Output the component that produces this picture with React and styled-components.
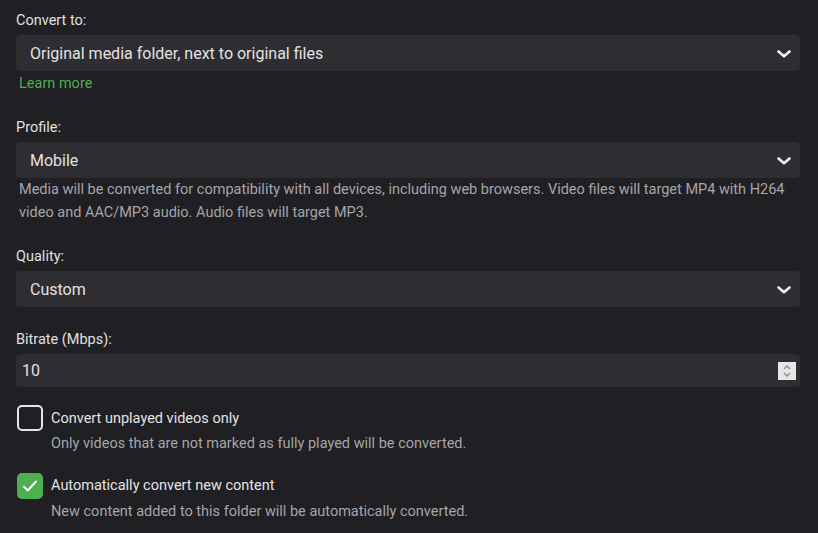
import React from 'react'
import styled, { createGlobalStyle } from 'styled-components';

const GlobalStyle = createGlobalStyle`
  html, body {
    margin: 0;
    padding: 0;
    background: #201f23;
    font-family: Roboto, "Noto Sans", "Liberation Sans", sans-serif;
    color: #e6e6e6;
  }
`;

const Page = styled.div`
  width: 818px;
  height: 533px;
  box-sizing: border-box;
  padding: 12px 18px 0 16px;
  background: #201f23;
  overflow: hidden;
`;

const Field = styled.div`
  margin-bottom: ${p => p.gap || 24}px;
`;

const Label = styled.label`
  display: block;
  font-size: 14.5px;
  line-height: 18px;
  color: #e0e0e0;
  margin-bottom: 5px;
`;

const SelectBox = styled.div`
  display: flex;
  align-items: center;
  height: 36px;
  padding: 0 9px 0 14px;
  border-radius: 4px;
  background: #2e2d31;
  font-size: 16px;
  color: #e2e2e2;
`;

const Value = styled.span`
  flex: 1;
`;

const Chevron = styled.svg`
  width: 14px;
  height: 8px;
  margin-top: 2px;
`;

const LearnMore = styled.a`
  display: block;
  margin: 4px 0 0 3px;
  font-size: 14.5px;
  line-height: 18px;
  color: #4caf50;
  text-decoration: none;
`;

const Desc = styled.div`
  margin: ${p => p.top || 0}px 0 0 ${p => p.left || 3}px;
  font-size: 14.5px;
  line-height: 23.2px;
  color: #a6a5a9;
`;

const NumberBox = styled.div`
  display: flex;
  align-items: center;
  height: 33px;
  padding: 0 4px 0 6px;
  border-radius: 4px;
  background: #2e2d31;
  font-size: 16px;
  color: #e2e2e2;
`;

const Spinner = styled.div`
  width: 18px;
  height: 18px;
  background: #e6e6e6;
  display: flex;
  align-items: center;
  justify-content: center;
`;

const CheckRow = styled.div`
  display: flex;
  align-items: center;
  gap: 8px;
`;

const Box = styled.div`
  width: 26px;
  height: 26px;
  margin-left: 1px;
  box-sizing: border-box;
  border-radius: 5px;
  border: ${p => (p.checked ? 'none' : '2px solid #e6e6e6')};
  background: ${p => (p.checked ? '#4caf50' : 'transparent')};
  display: flex;
  align-items: center;
  justify-content: center;
`;

const CheckLabel = styled.span`
  font-size: 14.5px;
  color: #e4e4e4;
`;

const Chev = () => (
  <Chevron viewBox="0 0 14 8" fill="none" stroke="#f0f0f0" strokeWidth="2.6" strokeLinecap="round" strokeLinejoin="round">
    <polyline points="1.5,1.5 7,6.3 12.5,1.5" />
  </Chevron>
);

const Select = ({ value }) => (
  <SelectBox>
    <Value>{value}</Value>
    <Chev />
  </SelectBox>
);

const Check = ({ checked, label, desc, gap }) => (
  <Field gap={gap}>
    <CheckRow>
      <Box checked={checked}>
        {checked && (
          <svg width="18" height="18" viewBox="0 0 24 24" fill="none" stroke="#fff" strokeWidth="2.6" strokeLinecap="round" strokeLinejoin="round">
            <polyline points="4,13 9,18 20,6" />
          </svg>
        )}
      </Box>
      <CheckLabel>{label}</CheckLabel>
    </CheckRow>
    <Desc top={1} left={35}>{desc}</Desc>
  </Field>
);

const App = () => {
  return (
    <Page>
      <GlobalStyle />
      <Field gap={26}>
        <Label>Convert to:</Label>
        <Select value="Original media folder, next to original files" />
        <LearnMore href="#">Learn more</LearnMore>
      </Field>

      <Field gap={24}>
        <Label>Profile:</Label>
        <Select value="Mobile" />
        <Desc>
          Media will be converted for compatibility with all devices, including web browsers. Video files will target MP4 with H264 video and AAC/MP3 audio. Audio files will target MP3.
        </Desc>
      </Field>

      <Field gap={24}>
        <Label>Quality:</Label>
        <Select value="Custom" />
      </Field>

      <Field gap={18}>
        <Label>Bitrate (Mbps):</Label>
        <NumberBox>
          <Value>10</Value>
          <Spinner>
            <svg width="10" height="14" viewBox="0 0 10 14" fill="none" stroke="#8a8a8a" strokeWidth="1.3">
              <polyline points="2,5 5,2 8,5" />
              <polyline points="2,9 5,12 8,9" />
            </svg>
          </Spinner>
        </NumberBox>
      </Field>

      <Check gap={17} label="Convert unplayed videos only" desc="Only videos that are not marked as fully played will be converted." />
      <Check checked gap={0} label="Automatically convert new content" desc="New content added to this folder will be automatically converted." />
    </Page>
  )
}

export default App
